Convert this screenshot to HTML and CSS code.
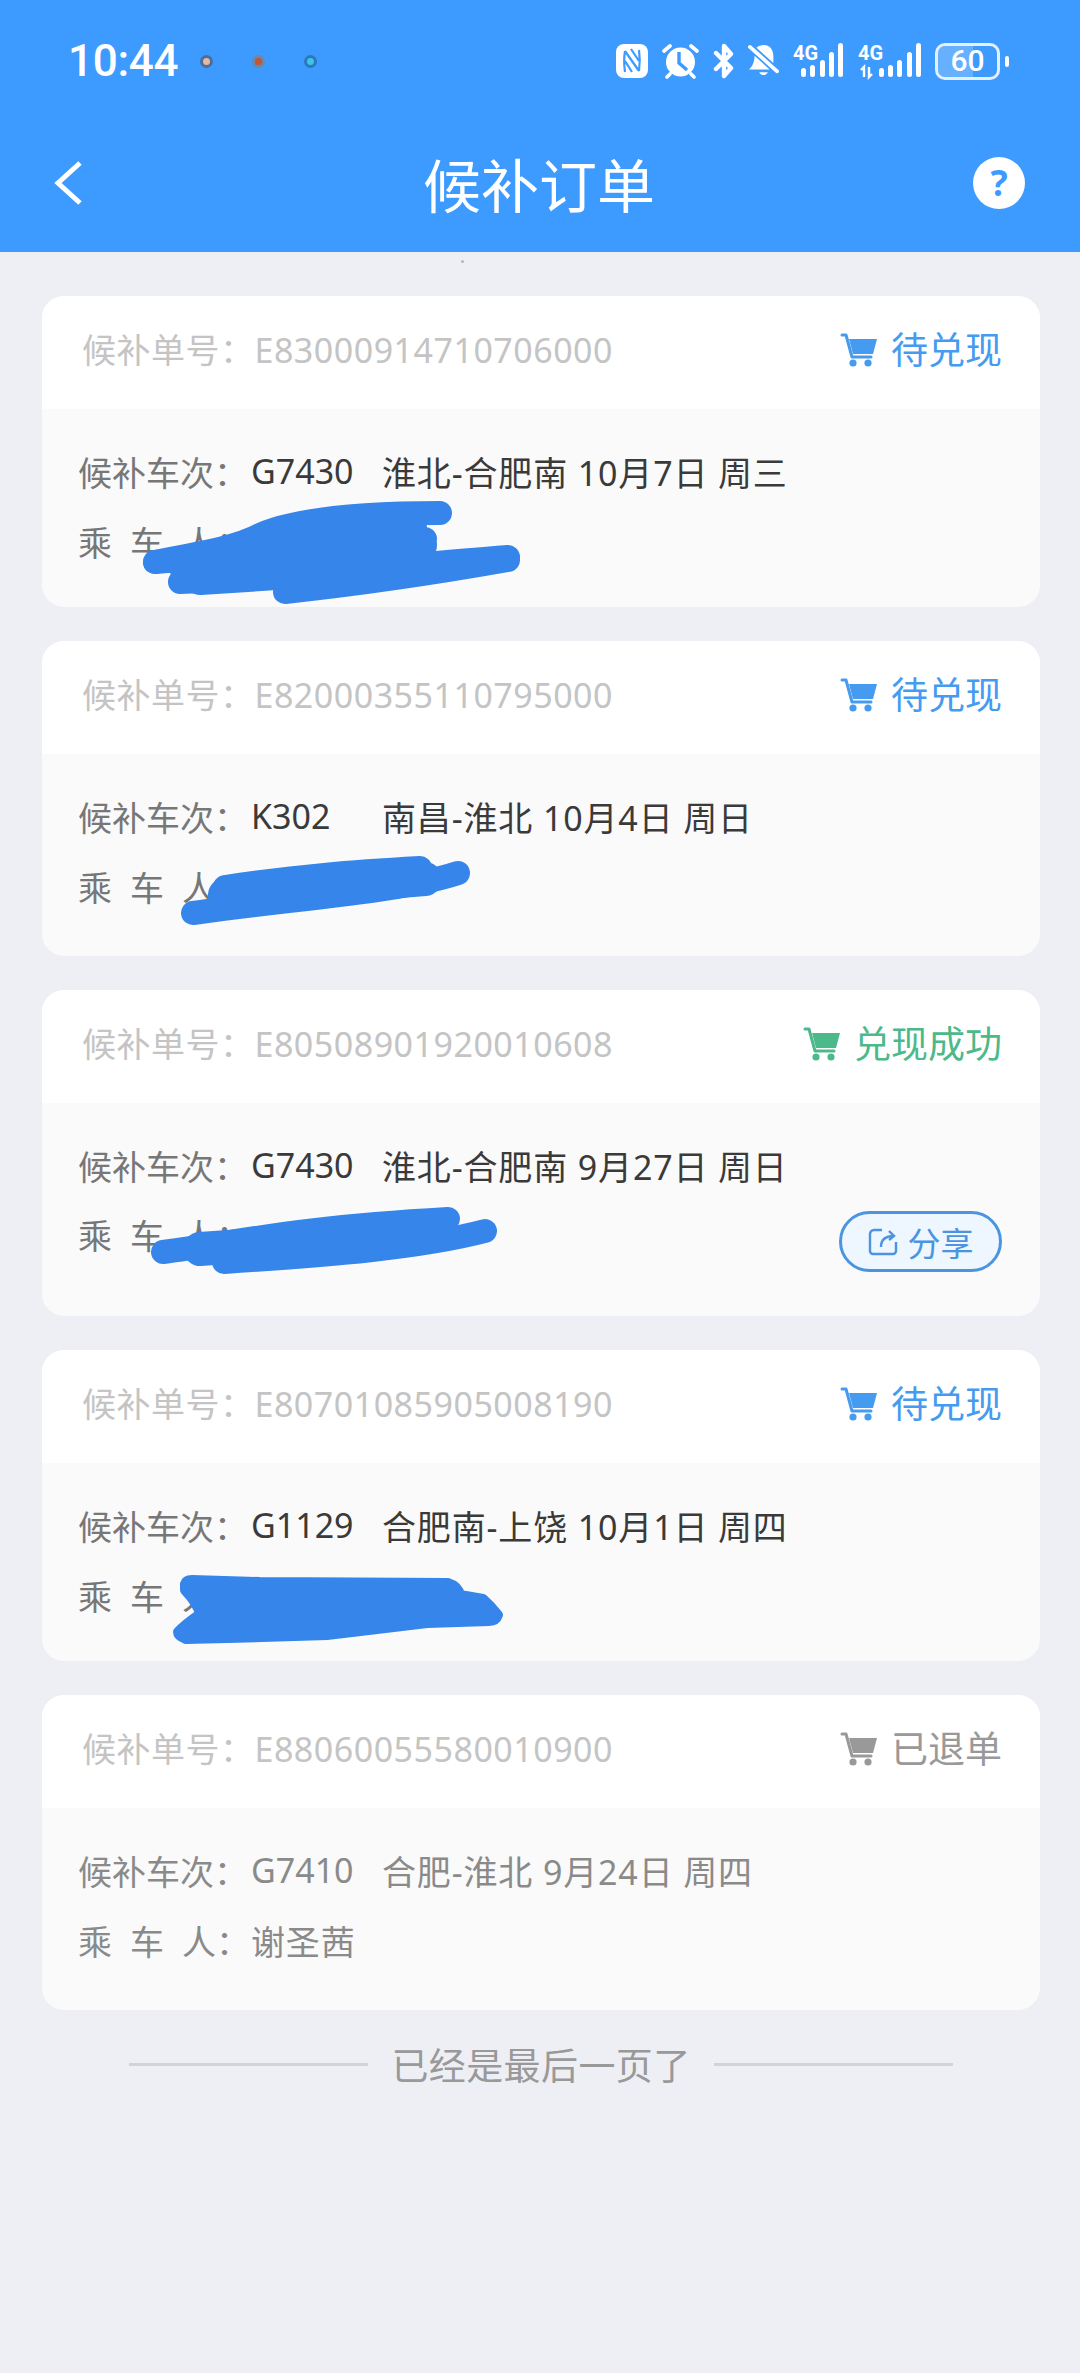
FILE: index.html
```html
<!DOCTYPE html>
<html lang="zh-CN">

<head>
    <meta charset="utf-8">
    <title>候补订单</title>
    <link rel="stylesheet" href="styles.css">
</head>

<body>
    <!-- shared cart icon -->
    <svg class="defs" width="0" height="0">
        <symbol id="cart" viewBox="0 0 37 35">
            <path d="M2 3h4l6 22h19" fill="none" stroke="currentColor" stroke-width="3" stroke-linecap="round" stroke-linejoin="round" />
            <path d="M9 7h28l-4 15H13z" fill="currentColor" />
            <circle cx="13" cy="31" r="3.6" fill="currentColor" />
            <circle cx="28" cy="31" r="3.6" fill="currentColor" />
        </symbol>
    </svg>

    <div class="header">
        <div class="statusbar">
            <div class="statusbar-left">
                <span class="time">10:44</span>
                <span class="notif-dot dot-tan"></span>
                <span class="notif-dot dot-red"></span>
                <span class="notif-dot dot-cyan"></span>
            </div>
            <div class="statusbar-right">
                <!-- nfc -->
                <svg width="32" height="34" viewBox="0 0 32 34">
                    <rect width="32" height="34" rx="8" fill="#fff" />
                    <path d="M9 7c-1 6-1 14 0 21M23 6c1 7 1 14 0 21M9 7l14 20M15 5l8 12M9 17l7 11" fill="none" stroke="#3d9aff" stroke-width="2.2" />
                </svg>
                <!-- alarm -->
                <svg width="37" height="36" viewBox="0 0 37 36">
                    <circle cx="18.5" cy="19" r="14.5" fill="#fff" />
                    <path d="M17 9v11l8 7" fill="none" stroke="#3d9aff" stroke-width="3.4" />
                    <path d="M2 8l6-5M35 8l-6-5M8 31l-3 3M29 31l3 3" fill="none" stroke="#fff" stroke-width="3.6" stroke-linecap="round" />
                </svg>
                <!-- bluetooth -->
                <svg width="21" height="36" viewBox="0 0 21 36">
                    <path d="M3 10l15 15-7 8V3l7 8L3 26" fill="none" stroke="#fff" stroke-width="4.4" stroke-linecap="round" stroke-linejoin="round" />
                </svg>
                <!-- muted bell -->
                <svg width="31" height="36" viewBox="0 0 33 36">
                    <path d="M9 4c2-2 5-3 8-3 7 0 10 6 10 12v7zM7 12.500L23 27H1c4-3 6-9 6-14.500zM12 30h9c-1 4-8 4-9 0z" fill="#fff" />
                    <path d="M2 3l29 26" fill="none" stroke="#fff" stroke-width="4" stroke-linecap="round" />
                </svg>
                <!-- signal 1 -->
                <svg width="51" height="40" viewBox="0 -2 51 40">
                    <text x="0" y="17" class="net-label">4G</text>
                    <rect x="8" y="25" width="5" height="9" rx="2.500" fill="#fff" />
                    <rect x="17" y="22" width="5" height="12" rx="2.500" fill="#fff" />
                    <rect x="27" y="17" width="5" height="17" rx="2.500" fill="#fff" />
                    <rect x="36" y="9" width="5" height="25" rx="2.500" fill="#fff" />
                    <rect x="45" y="0" width="5" height="34" rx="2.500" fill="#fff" />
                </svg>
                <!-- signal 2 -->
                <svg width="63" height="40" viewBox="0 -2 63 40">
                    <text x="0" y="17" class="net-label">4G</text>
                    <path d="M6 34V24l-3 3M11 24v10l3-3" fill="none" stroke="#fff" stroke-width="2.400" />
                    <rect x="21" y="25" width="5" height="9" rx="2.500" fill="#fff" />
                    <rect x="30" y="22" width="5" height="12" rx="2.500" fill="#fff" />
                    <rect x="39" y="17" width="5" height="17" rx="2.500" fill="#fff" />
                    <rect x="49" y="9" width="5" height="25" rx="2.500" fill="#fff" />
                    <rect x="58" y="0" width="5" height="34" rx="2.500" fill="#fff" />
                </svg>
                <div class="battery">
                    <div class="battery-body">
                        <span class="battery-level" style="width: 60%"></span>
                        <span class="battery-num">60</span>
                    </div>
                    <span class="battery-nub"></span>
                </div>
            </div>
        </div>
        <div class="navbar">
            <div class="nav-back">
                <svg width="31" height="46" viewBox="0 0 31 46">
                    <path d="M27 3L5 23l22 20" fill="none" stroke="#fff" stroke-width="5" />
                </svg>
            </div>
            <div class="nav-title">候补订单</div>
            <div class="nav-help"><span class="help-circle">?</span></div>
        </div>
    </div>

    <div class="order-list">
        <span class="scroll-dot"></span>

        <div class="card">
            <div class="card-head">
                <span class="order-no">候补单号：E83000914710706000</span>
                <span class="status status-wait"><svg class="cart"><use href="#cart" /></svg>待兑现</span>
            </div>
            <div class="card-body">
                <div class="row">
                    <span class="label">候补车次：</span><span class="train">G7430</span><span class="value">淮北-合肥南 10月7日 周三</span>
                </div>
                <div class="row">
                    <span class="label"><span class="label-spread">乘车人</span>：</span>
                </div>
            </div>
            <svg class="scribble" viewBox="42 296 998 311">
                <path d="M155 562C210 552 240 546 262 534C300 518 370 513 440 513" />
                <path d="M155 562L300 550L425 539" />
                <path d="M180 582C300 578 400 565 508 557" />
                <path d="M285 592C360 584 440 572 508 560" />
                <path class="scribble-fill" d="M185 565L420 545" />
                <path class="scribble-fill" d="M270 540L410 528" />
                <path class="scribble-fill" d="M200 578L400 565" />
            </svg>
        </div>

        <div class="card card-roomy">
            <div class="card-head">
                <span class="order-no">候补单号：E82000355110795000</span>
                <span class="status status-wait"><svg class="cart"><use href="#cart" /></svg>待兑现</span>
            </div>
            <div class="card-body">
                <div class="row">
                    <span class="label">候补车次：</span><span class="train">K302</span><span class="value">南昌-淮北 10月4日 周日</span>
                </div>
                <div class="row">
                    <span class="label"><span class="label-spread">乘车人</span>：</span>
                </div>
            </div>
            <svg class="scribble" viewBox="42 641 998 315">
                <path d="M193 913C300 898 400 892 458 873" />
                <path d="M225 887C300 876 350 872 420 868" />
                <path class="scribble-fill" d="M225 895L425 879" />
            </svg>
        </div>

        <div class="card">
            <div class="card-head">
                <span class="order-no">候补单号：E80508901920010608</span>
                <span class="status status-done"><svg class="cart"><use href="#cart" /></svg>兑现成功</span>
            </div>
            <div class="card-body">
                <div class="row">
                    <span class="label">候补车次：</span><span class="train">G7430</span><span class="value">淮北-合肥南 9月27日 周日</span>
                </div>
                <div class="row row-share">
                    <span class="label"><span class="label-spread">乘车人</span>：</span>
                    <span class="share-btn">
                        <svg width="30" height="28" viewBox="0 0 30 28">
                            <path d="M14 2H6a4 4 0 0 0-4 4v17a3 3 0 0 0 3 3h20a3 3 0 0 0 3-3v-9" fill="none" stroke="currentColor" stroke-width="2.400" />
                            <path d="M13 19c0-7 4-11 13-11M21 3l5 5-5 4" fill="none" stroke="currentColor" stroke-width="2.400" />
                        </svg>分享
                    </span>
                </div>
            </div>
            <svg class="scribble" viewBox="42 990 998 326">
                <path d="M163 1252C240 1242 290 1228 448 1219" />
                <path d="M224 1262C330 1255 420 1248 485 1231" />
                <path class="scribble-fill" d="M200 1249L440 1232" />
                <path class="scribble-fill" d="M260 1250L430 1236" />
            </svg>
        </div>

        <div class="card">
            <div class="card-head">
                <span class="order-no">候补单号：E80701085905008190</span>
                <span class="status status-wait"><svg class="cart"><use href="#cart" /></svg>待兑现</span>
            </div>
            <div class="card-body">
                <div class="row">
                    <span class="label">候补车次：</span><span class="train">G1129</span><span class="value">合肥南-上饶 10月1日 周四</span>
                </div>
                <div class="row">
                    <span class="label"><span class="label-spread">乘车人</span>：</span>
                </div>
            </div>
            <svg class="scribble scribble-solid" viewBox="42 1350 998 311">
                <path d="M185 1584Q186 1580 192 1580L260 1582L448 1583Q458 1586 460 1595L483 1599Q491 1606 498 1615Q496 1621 489 1621L427 1623L327 1635L227 1638L186 1639Q178 1636 178 1632Q184 1625 200 1614Q198 1604 185 1590Z" />
            </svg>
        </div>

        <div class="card card-roomy card-muted">
            <div class="card-head">
                <span class="order-no">候补单号：E88060055580010900</span>
                <span class="status status-refund"><svg class="cart"><use href="#cart" /></svg>已退单</span>
            </div>
            <div class="card-body">
                <div class="row">
                    <span class="label">候补车次：</span><span class="train">G7410</span><span class="value">合肥-淮北 9月24日 周四</span>
                </div>
                <div class="row">
                    <span class="label"><span class="label-spread">乘车人</span>：</span><span class="value">谢圣茜</span>
                </div>
            </div>
        </div>

        <div class="list-end">
            <span class="end-line"></span>
            <span>已经是最后一页了</span>
            <span class="end-line"></span>
        </div>
    </div>
</body>

</html>
```

FILE: styles.css
```css
body {
    margin: 0;
    height: 2373px;
    overflow: hidden;
    background-color: #eeeff4;
    font-family: "Noto Sans", "Noto Sans CJK SC", sans-serif;
    color: #3a3a3a;
}

.defs {
    display: block;
    height: 0;
}

.header {
    height: 252px;
    background-color: #3d9aff;
    color: white;
}

/* status bar */
.statusbar {
    height: 122px;
    display: flex;
    justify-content: space-between;
    align-items: center;
    padding: 0 71px 0 68px;
}

.statusbar-left {
    display: flex;
    align-items: center;
}

.time {
    width: 132px;
    font-family: Roboto, sans-serif;
    font-size: 44px;
    font-weight: 500;
    letter-spacing: -0.3px;
}

.notif-dot {
    width: 13px;
    height: 13px;
    margin-right: 39px;
    border-radius: 50%;
    box-sizing: border-box;
    border: 3px solid #4b6f9c;
}

.dot-tan {
    background-color: #e8b79c;
}

.dot-red {
    background-color: #c4552f;
    border-color: #6d87a5;
}

.dot-cyan {
    background-color: #3cc3ee;
    border-color: #2f78b8;
}

.statusbar-right {
    display: flex;
    align-items: center;
    gap: 14px;
}

.net-label {
    font-family: Roboto, sans-serif;
    font-size: 20px;
    font-weight: 700;
    fill: white;
}

.battery {
    display: flex;
    align-items: center;
    gap: 5px;
}

.battery-body {
    position: relative;
    width: 65px;
    height: 37px;
    box-sizing: border-box;
    border: 3px solid rgba(255, 255, 255, 0.85);
    border-radius: 10px;
    overflow: hidden;
    display: flex;
    align-items: center;
    justify-content: center;
}

.battery-level {
    position: absolute;
    left: 0;
    top: 0;
    bottom: 0;
    background-color: rgba(255, 255, 255, 0.22);
}

.battery-num {
    position: relative;
    font-family: Roboto, sans-serif;
    font-size: 30px;
    font-weight: 500;
    line-height: 1;
}

.battery-nub {
    width: 4px;
    height: 11px;
    border-radius: 2px;
    background-color: white;
}

/* title bar */
.navbar {
    height: 122px;
    display: grid;
    grid-template-columns: 1fr auto 1fr;
    align-items: center;
    padding: 0 55px 0 53px;
}

.nav-back svg {
    display: block;
}

.nav-title {
    font-family: "Noto Sans CJK SC", sans-serif;
    font-size: 58px;
    line-height: 1;
}

.nav-help {
    display: flex;
    justify-content: flex-end;
}

.help-circle {
    width: 52px;
    height: 52px;
    border-radius: 50%;
    background-color: white;
    color: #3d9aff;
    font-size: 36px;
    font-weight: 700;
    line-height: 52px;
    text-align: center;
}

/* order cards */
.order-list {
    position: relative;
    display: flex;
    flex-direction: column;
    gap: 34px;
    padding: 44px 40px 0 42px;
}

.scroll-dot {
    position: absolute;
    left: 461px;
    top: 8px;
    width: 3px;
    height: 3px;
    border-radius: 50%;
    background-color: #b5b7bd;
}

.card {
    position: relative;
    border-radius: 22px;
    overflow: hidden;
    background-color: #fafafa;
}

.card-head {
    height: 113px;
    box-sizing: border-box;
    padding: 0 38px 8px 40px;
    display: flex;
    justify-content: space-between;
    align-items: center;
    background-color: white;
}

.order-no {
    font-size: 34px;
    letter-spacing: 0.5px;
    color: #c4c4c4;
}

.status {
    display: flex;
    align-items: center;
    gap: 14px;
    margin-top: -2px;
    font-family: "Noto Sans CJK SC", sans-serif;
    font-size: 37px;
    line-height: 48px;
}

.cart {
    width: 37px;
    height: 35px;
    margin-top: 3px;
}

.status-wait {
    color: #459bf0;
}

.status-done {
    color: #4cb98a;
}

.status-refund {
    color: #999;
}

.card-body {
    padding: 42px 36px 46px;
    display: flex;
    flex-direction: column;
    gap: 30px;
    font-size: 34px;
}

.card-roomy .card-body {
    padding-bottom: 50px;
}

.row {
    height: 40px;
    display: flex;
    align-items: center;
    white-space: nowrap;
}

.row-share {
    justify-content: space-between;
    align-items: flex-start;
    height: 55px;
    margin-right: 2px;
}

.label {
    width: 173px;
    display: flex;
    color: #777;
}

.row-share .label {
    line-height: 42px;
}

.label-spread {
    width: 138px;
    text-align-last: justify;
}

.train {
    width: 131px;
}

.value {
    letter-spacing: 0.85px;
}

.card-muted .label,
.card-muted .value,
.card-muted .train {
    color: #8a8a8a;
}

.share-btn {
    width: 163px;
    height: 61px;
    margin-top: -4px;
    box-sizing: border-box;
    border: 3px solid #4b94e2;
    border-radius: 31px;
    background-color: #eef6ff;
    color: #4b94e2;
    display: flex;
    align-items: center;
    justify-content: center;
    gap: 10px;
    font-family: "Noto Sans CJK SC", sans-serif;
    font-size: 33px;
}

/* ink strokes drawn over the passenger names */
.scribble {
    position: absolute;
    left: 0;
    top: 0;
    width: 100%;
    height: 100%;
    fill: none;
    stroke: #3585ea;
    stroke-width: 24;
    stroke-linecap: round;
    stroke-linejoin: round;
}

.scribble-fill {
    stroke-width: 34;
}

.scribble-solid {
    fill: #3585ea;
    stroke-width: 10;
}

/* end of list */
.list-end {
    display: flex;
    align-items: center;
    justify-content: center;
    gap: 23px;
    margin-top: -4px;
    font-family: "Noto Sans CJK SC", sans-serif;
    font-size: 37px;
    letter-spacing: 0.4px;
    line-height: 48px;
    color: #999;
}

.end-line {
    width: 239px;
    height: 3px;
    background-color: #d2d3d8;
}
```
